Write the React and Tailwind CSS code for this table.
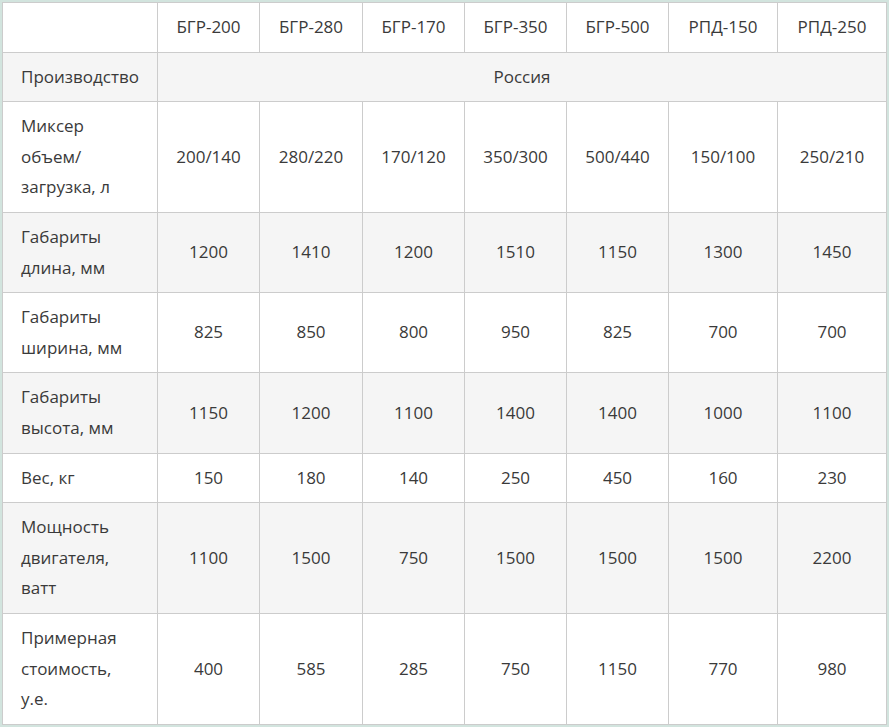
import React from "react";

const cols = ["БГР-200", "БГР-280", "БГР-170", "БГР-350", "БГР-500", "РПД-150", "РПД-250"];
const rows = [
  { label: ["Миксер", "объем/", "загрузка, л"], vals: ["200/140", "280/220", "170/120", "350/300", "500/440", "150/100", "250/210"] },
  { label: ["Габариты", "длина, мм"], vals: ["1200", "1410", "1200", "1510", "1150", "1300", "1450"] },
  { label: ["Габариты", "ширина, мм"], vals: ["825", "850", "800", "950", "825", "700", "700"] },
  { label: ["Габариты", "высота, мм"], vals: ["1150", "1200", "1100", "1400", "1400", "1000", "1100"] },
  { label: ["Вес, кг"], vals: ["150", "180", "140", "250", "450", "160", "230"] },
  { label: ["Мощность", "двигателя,", "ватт"], vals: ["1100", "1500", "750", "1500", "1500", "1500", "2200"] },
  { label: ["Примерная", "стоимость,", "у.е."], vals: ["400", "585", "285", "750", "1150", "770", "980"] },
];

const widths = [155, 102, 103, 102, 102, 102, 109, 109];

export default function App() {
  const cell = "border border-[#cccccc] py-[9px] leading-[30.6px] align-middle";
  return (
    <div className="w-[889px] h-[727px] bg-[#d2e4de] pt-[2px] pl-[2px] overflow-hidden" style={{ fontFamily: '"Open Sans", sans-serif' }}>
      <table className="table-fixed border-collapse bg-white text-[17px] text-[#3a3a3a] w-[884px]">
        <colgroup>
          {widths.map((w, i) => (
            <col key={i} style={{ width: w }} />
          ))}
        </colgroup>
        <tbody>
          <tr className="bg-white">
            <td className={cell}></td>
            {cols.map((c) => (
              <td key={c} className={cell + " text-center"}>{c}</td>
            ))}
          </tr>
          <tr className="bg-[#f5f5f5]">
            <td className={cell + " pl-[18px] text-left"}>Производство</td>
            <td className={cell + " text-center"} colSpan={7}>Россия</td>
          </tr>
          {rows.map((r, i) => (
            <tr key={i} className={i % 2 === 0 ? "bg-white" : "bg-[#f5f5f5]"}>
              <td className={cell + " pl-[18px] pr-2 text-left"}>
                {r.label.map((l, j) => (
                  <div key={j}>{l}</div>
                ))}
              </td>
              {r.vals.map((v, j) => (
                <td key={j} className={cell + " text-center"}>{v}</td>
              ))}
            </tr>
          ))}
        </tbody>
      </table>
    </div>
  );
}
